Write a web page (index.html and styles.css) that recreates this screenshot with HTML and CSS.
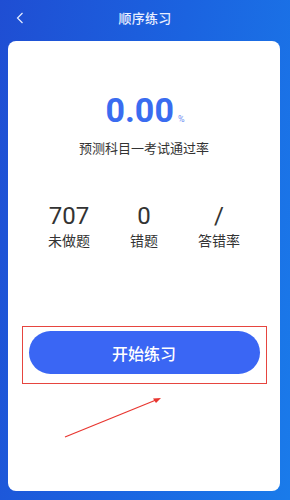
FILE: index.html
```html
<!DOCTYPE html>
<html lang="zh-CN">
<head>
    <meta charset="UTF-8">
    <meta name="viewport" content="width=device-width, initial-scale=1.0">
    <title>顺序练习</title>
    <link rel="stylesheet" href="styles.css">
</head>
<body>
    <header class="topbar">
        <span class="back">
            <svg width="8" height="12" viewBox="0 0 8 12"><path d="M6.5 1 L1.5 6 L6.5 11" fill="none" stroke="#e6edff" stroke-width="1.2"/></svg>
        </span>
        <h1 class="title">顺序练习</h1>
        <span class="side"></span>
    </header>

    <main class="card">
        <div class="rate">
            <span class="rate-num">0.00</span><span class="rate-unit">%</span>
        </div>
        <p class="rate-label">预测科目一考试通过率</p>

        <div class="stats">
            <div class="stat">
                <div class="stat-num">707</div>
                <div class="stat-label">未做题</div>
            </div>
            <div class="stat">
                <div class="stat-num">0</div>
                <div class="stat-label">错题</div>
            </div>
            <div class="stat">
                <div class="stat-num">/</div>
                <div class="stat-label">答错率</div>
            </div>
        </div>

        <div class="mark-box">
            <button class="start-btn" type="button">开始练习</button>
        </div>
    </main>

    <!-- annotation arrow drawn over the card -->
    <svg class="arrow" width="290" height="500" viewBox="0 0 290 500">
        <line x1="65" y1="437" x2="156" y2="400" stroke="#e8352f" stroke-width="1.2"/>
        <polygon points="161,398 153,398.5 156,403" fill="#e8352f"/>
    </svg>
</body>
</html>
```

FILE: styles.css
```css
body {
    margin: 0;
    width: 290px;
    height: 500px;
    overflow: hidden;
    position: relative;
    font-family: Roboto, "Noto Sans CJK SC", sans-serif;
    background: linear-gradient(100deg, #1f4ed3 0%, #1b63e0 50%, #1a7bea 100%);
    color: #333;
}
.topbar {
    height: 41px;
    display: grid;
    grid-template-columns: 40px 1fr 40px;
    align-items: center;
}
.back {
    padding-left: 16px;
    display: flex;
    align-items: center;
    margin-top: -6px;
}
.title {
    margin: 0;
    margin-top: -6px;
    text-align: center;
    font-size: 13px;
    font-weight: 500;
    color: #e8eeff;
    letter-spacing: 0.3px;
}
.card {
    margin: 0 10px 0 8px;
    height: 450px;
    background: #fff;
    border-radius: 8px;
    box-sizing: border-box;
    padding-top: 49px;
    display: flex;
    flex-direction: column;
    align-items: center;
}
.rate {
    height: 40px;
    line-height: 40px;
    margin-left: 2px;
}
.rate-num {
    font-size: 34px;
    font-weight: bold;
    color: #3a6cf0;
}
.rate-unit {
    font-size: 9px;
    color: #6d8ff2;
    margin-left: 4px;
}
.rate-label {
    margin: 10px 0 0;
    font-size: 13px;
    line-height: 18px;
    color: #333;
}
.stats {
    margin-top: 44px;
    display: grid;
    grid-template-columns: repeat(3, 75px);
}
.stat {
    text-align: center;
}
.stat-num {
    font-size: 24px;
    line-height: 28px;
    color: #333;
}
.stat-label {
    margin-top: 1px;
    font-size: 14px;
    line-height: 20px;
    color: #333;
}
.mark-box {
    margin-top: 75px;
    width: 245px;
    box-sizing: border-box;
    border: 1px solid #e6453f;
    padding: 4px 6px 9px;
}
.start-btn {
    width: 100%;
    height: 43px;
    border: none;
    border-radius: 22px;
    background-color: #3a66f4;
    color: #fff;
    font-family: "Noto Sans CJK SC", sans-serif;
    font-size: 16px;
    font-weight: 500;
    padding: 0;
}
.arrow {
    position: absolute;
    left: 0;
    top: 0;
    pointer-events: none;
}
```
